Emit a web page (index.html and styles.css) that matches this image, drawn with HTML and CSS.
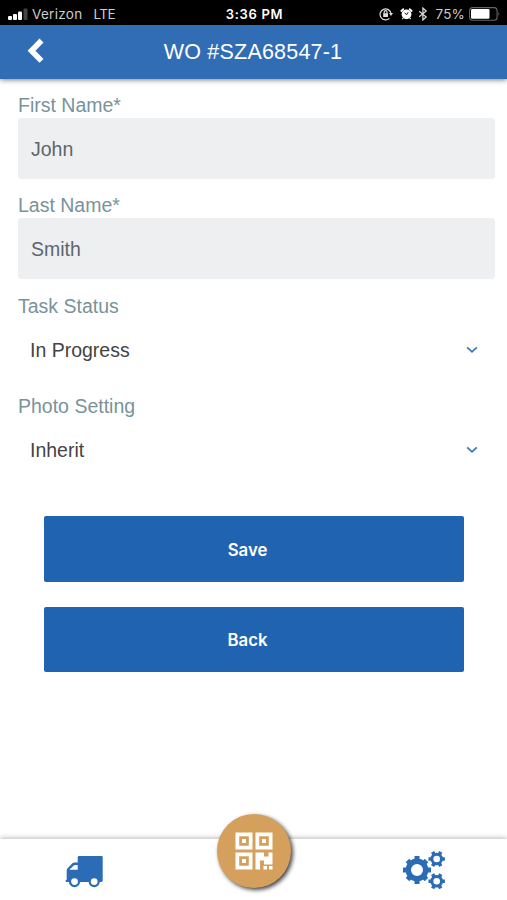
FILE: index.html
```html
<!DOCTYPE html>
<html lang="en">
<head>
<meta charset="utf-8">
<title>WO #SZA68547-1</title>
<link rel="stylesheet" href="styles.css">
</head>
<body>
<div class="status">
  <div class="carrier">
    <svg class="signal" width="20" height="12" viewBox="0 0 20 12"><g fill="#fff"><rect x="0" y="8" width="4" height="4" rx="1"/><rect x="5" y="6" width="4" height="6" rx="1"/><rect x="10" y="3.5" width="4" height="8.5" rx="1"/></g><rect x="15.5" y="0.5" width="4" height="11.5" rx="1" fill="#444"/></svg>
    <span class="verizon">Verizon</span><span class="lte">LTE</span>
  </div>
  <span class="time">3:36 PM</span>
  <div class="indicators">
    <svg width="14" height="14" viewBox="0 0 14 14" fill="none" stroke="#ddd" stroke-width="1.2"><path d="M10.5 11.3A5.5 5.5 0 1 1 12 6.5"/><path d="M10 6h4l-2 3z" fill="#ddd" stroke="none"/><rect x="4.2" y="6.2" width="4.8" height="3.8" fill="#ddd" stroke="none"/><path d="M5.2 6.5V5a1.4 1.4 0 0 1 2.8 0v1.5"/></svg>
    <svg class="alarm" width="13" height="14" viewBox="0 0 13 14"><circle cx="6.5" cy="7.3" r="4.9" fill="#fff"/><path d="M1.300 4 3.300 2.200M11.700 4 9.700 2.200" stroke="#fff" stroke-width="1.8" stroke-linecap="round"/><path d="M3.200 11.200l-.8 1M9.800 11.200l.8 1" stroke="#fff" stroke-width="1.2"/><path d="M4.600 5.900l2.100 1.700 1.500-2.400" fill="none" stroke="#000" stroke-width=".9"/></svg>
    <svg class="bluetooth" width="10" height="14" viewBox="0 0 10 14" fill="none" stroke="#ddd" stroke-width="1.2"><path d="M1.2 4.200l7 5.800L4.900 13V1l3.300 3-7 5.800"/></svg>
    <span class="percent">75%</span>
    <svg class="battery" width="32" height="14" viewBox="0 0 32 14"><rect x=".6" y=".6" width="27.5" height="12.6" rx="3" fill="none" stroke="#666" stroke-width="1.1"/><rect x="2" y="2" width="18.5" height="9.8" rx="1.2" fill="#fff"/><path d="M29.5 4.8q1.8 2.1 0 4.2z" fill="#666"/></svg>
  </div>
</div>
<header class="header">
  <svg class="chevron" width="18" height="28" viewBox="0 0 18 28"><path d="M14.500 3.500 4.500 13.700 14.500 23.900" fill="none" stroke="#fff" stroke-width="5.600"/></svg>
  <h1>WO #SZA68547-1</h1>
</header>
<main class="form">
  <div class="field"><label class="first">First Name*</label><div class="input">John</div></div>
  <div class="field"><label>Last Name*</label><div class="input">Smith</div></div>
  <div class="field"><label>Task Status</label><div class="select"><span class="progress">In Progress</span><svg width="12" height="8" viewBox="0 0 12 8"><path d="M1.200 1.300 6 5.900l4.800-4.600"/></svg></div></div>
  <div class="field"><label>Photo Setting</label><div class="select"><span>Inherit</span><svg width="12" height="8" viewBox="0 0 12 8"><path d="M1.200 1.300 6 5.900l4.800-4.600"/></svg></div></div>
  <div class="actions">
    <button type="button">Save</button>
    <button type="button">Back</button>
  </div>
</main>
<nav class="tabs">
  <svg class="truck" width="38" height="32" viewBox="0 0 38 32"><path fill="#2c6cb6" fill-rule="evenodd" d="M14 0h22.500q1.200 0 1.200 1.200v23.300q0 1.500-1.500 1.500H2Q.5 26 .5 24.800q0-1 1.200-1V14.200q0-1 .7-1.700l5-5.200Q8.300 6.500 9.500 6.500H12.700V1.200Q12.700 0 14 0zM4.500 13.800h8.200V9H10q-.7 0-1.200.5l-4 3.700z"/><g fill="#fff" stroke="#2c6cb6" stroke-width="2.200"><circle cx="9.500" cy="25.600" r="4.500"/><circle cx="29.200" cy="25.600" r="4.500"/></g></svg>
  <div class="scan"><svg width="38" height="38" viewBox="0 0 38 38"><g fill="none" stroke="#fff" stroke-width="3.700"><path d="M2.350 2.350h13.300v13.300H2.350zM22.350 2.350h13.300v13.300h-13.300zM2.350 22.350h13.300v13.300H2.350z"/></g><path fill="#fff" d="M7 7h4v4H7zM27 7h4v4h-4zM7 27h4v4H7zM20.500 20.500H29v4h4.500v-4h4v12H29v-4h-4v9h-4.500zM28.500 34h3.500v3.500h-3.500zM34 34h3.500v3.500H34z"/></svg></div>
  <svg class="gears" width="43" height="40" viewBox="0 0 43 40" fill="none" stroke="#2c6cb6">
    <g transform="translate(14 20)"><circle r="8.700" stroke-width="5.400"/><path stroke-width="5" d="M0-9V-14M0 9V14M-9 0H-14M9 0H14M6.600-6.600 9.500-9.500M-6.600-6.600-9.500-9.500M6.600 6.600 9.500 9.500M-6.600 6.600-9.500 9.500"/></g>
    <g transform="translate(33.700 9)"><circle r="4.800" stroke-width="3"/><path stroke-width="3.600" d="M-5 0H-8.200M5 0H8.200M2.500-4.300 4.100-7.100M-2.500-4.300-4.100-7.100M2.500 4.300 4.100 7.100M-2.500 4.300-4.100 7.100"/></g>
    <g transform="translate(33.700 31.300)"><circle r="4.800" stroke-width="3"/><path stroke-width="3.600" d="M-5 0H-8.200M5 0H8.200M2.500-4.300 4.100-7.100M-2.500-4.300-4.100-7.100M2.500 4.300 4.100 7.100M-2.500 4.300-4.100 7.100"/></g>
  </svg>
</nav>
</body>
</html>
```
FILE: styles.css
```css
* { box-sizing: border-box; }
body {
  margin: 0;
  height: 900px;
  display: flex;
  flex-direction: column;
  overflow: hidden;
  background: #fff;
  font-family: "Liberation Sans", Arial, sans-serif;
}
svg { display: block; flex: none; }
.status {
  height: 25px;
  flex: none;
  padding: 3px 6px 0 8px;
  display: grid;
  grid-template-columns: 1fr auto 1fr;
  align-items: center;
  background: #000;
  color: #fff;
  font-family: Inter, sans-serif;
  font-size: 13.5px;
  line-height: 20px;
  white-space: nowrap;
}
.carrier, .indicators { display: flex; align-items: center; color: #ccc; }
.verizon { margin-left: 4px; letter-spacing: .3px; }
.lte { margin-left: 11px; letter-spacing: -.5px; }
.time { font-weight: 600; font-size: 13px; letter-spacing: .7px; }
.indicators { justify-content: flex-end; }
.alarm { margin-left: 7px; }
.bluetooth { margin-left: 5px; }
.percent { margin: 0 4px 0 7px; letter-spacing: .2px; }
.header {
  height: 54px;
  flex: none;
  display: grid;
  grid-template-columns: 1fr auto 1fr;
  align-items: center;
  padding-left: 27px;
  padding-right: 28px;
  background: #306db5;
  color: #fff;
  box-shadow: 0 1px 5px rgba(0, 0, 0, .5);
}
.chevron { margin-top: -3px; }
h1 { margin: 0; font-size: 21.5px; font-weight: 400; line-height: 24px; letter-spacing: .2px; }
.form { flex: 1; padding: 14px 12px 0 18px; }
.field { height: 100.3px; }
label { display: block; height: 25px; line-height: 25px; font-size: 19.5px; color: #78939a; }
.input, .select { height: 61px; display: flex; align-items: center; font-size: 19.5px; padding: 2px 17px 0 13px; }
.input { border-radius: 3px; background: #edeff1; color: #5f666b; }
.select { justify-content: space-between; padding-left: 12px; color: #444; }
.select path { fill: none; stroke: #3977b9; stroke-width: 1.7; }
.actions { display: flex; flex-direction: column; gap: 25px; padding: 22.3px 31px 0 26px; }
button {
  height: 65.5px;
  padding: 1px 13px 0 0;
  border: 0;
  border-radius: 2px;
  background: #2064b1;
  color: #fff;
  font: 600 16.8px/20px Inter, sans-serif;
}
.tabs {
  position: relative;
  height: 61px;
  flex: none;
  display: flex;
  justify-content: space-between;
  align-items: flex-start;
  padding: 0 61px 0 65px;
  background: #fff;
  box-shadow: 0 -1px 5px rgba(0, 0, 0, .28);
}
.truck { margin-top: 17px; }
.gears { margin-top: 11px; }
.scan {
  position: absolute;
  left: 217px;
  top: -25px;
  width: 74px;
  height: 74px;
  border-radius: 50%;
  display: flex;
  align-items: center;
  justify-content: center;
  background: #d5a05b;
  box-shadow: 2px 2px 4px rgba(0, 0, 0, .75);
}
```
